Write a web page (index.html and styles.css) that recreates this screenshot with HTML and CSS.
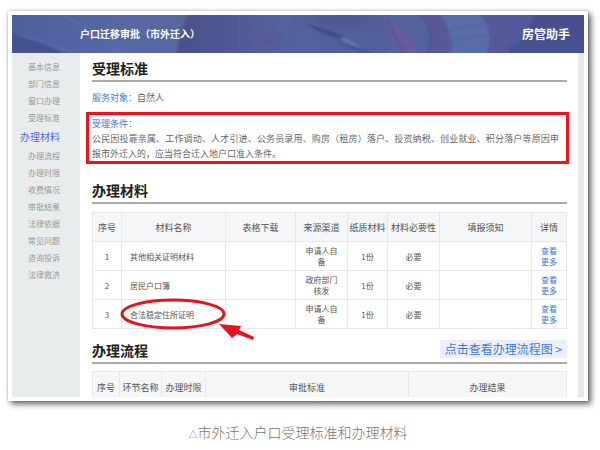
FILE: index.html
```html
<!DOCTYPE html>
<html lang="zh-CN">
<head>
<meta charset="utf-8">
<title>户口迁移审批（市外迁入）</title>
<link rel="stylesheet" href="styles.css">
</head>
<body>
<figure class="figure">
  <div class="card">
    <header class="banner">
      <svg class="banner-art" viewBox="0 0 572 38" preserveAspectRatio="none" aria-hidden="true">
        <defs>
          <filter id="soft" x="-5%" y="-20%" width="110%" height="140%"><feGaussianBlur stdDeviation="1"/></filter>
          <filter id="wide" x="-5%" y="-50%" width="110%" height="200%"><feGaussianBlur stdDeviation="8 4"/></filter>
          <linearGradient id="base" x1="0" x2="1"><stop offset="0" stop-color="#4c5f9f"/><stop offset=".2" stop-color="#5769a4"/><stop offset=".3" stop-color="#54679f"/><stop offset=".7" stop-color="#53649f"/><stop offset="1" stop-color="#4a5997"/></linearGradient>
          <linearGradient id="sleeve" x1="0" x2="1"><stop offset="0" stop-color="#4b4f8a"/><stop offset=".25" stop-color="#4f5994"/><stop offset=".5" stop-color="#53639f"/><stop offset="1" stop-color="#535f9a"/></linearGradient>
        </defs>
        <rect width="572" height="38" fill="url(#base)"/>
        <path d="M177 -4 H376 Q385 15 375 42 H164 Q168 15 177 -4Z" fill="url(#sleeve)" filter="url(#soft)"/>
        <g filter="url(#wide)">
          <ellipse cx="256" cy="24" rx="14" ry="7" fill="#5a5692"/>
          <ellipse cx="330" cy="4" rx="35" ry="5" fill="#4c5590"/>
        </g>
        <g filter="url(#soft)">
          <path d="M0 19 Q30 27 55 40 H0Z" fill="#42528f"/>
          <path d="M8 20 Q34 26 62 38" fill="none" stroke="#6072ac" stroke-width="1"/>
          <path d="M48 0 Q80 12 108 38" fill="none" stroke="#6072ac" stroke-width="1"/>
          <path d="M293 9 Q315 14 334 22 L332 25 Q312 20 293 9Z" fill="#41488a"/>
          <path d="M330 22 Q342 25 352 36 Q340 32 330 25Z" fill="#6977ab"/>
          <path d="M320 24 L350 38 H362 L345 32Z" fill="#4a528e"/>
          <path d="M375 4 Q397 14 410 40 H390 Q378 22 375 4Z" fill="#635d9a"/>
          <path d="M376 5 Q382 22 392 38" fill="none" stroke="#474f8c" stroke-width="1"/>
          <path d="M407 -2 H426 Q441 22 437 40 H416 Q422 18 407 -2Z" fill="#5a5894"/>
          <path d="M408 0 Q418 10 419 24 L416 38" fill="none" stroke="#474e8b" stroke-width="1"/>
          <path d="M428 -2 H470 L480 18 L474 40 H440 Q442 18 428 -2Z" fill="#586da7"/>
          <path d="M434 16 L476 8 M438 26 L478 19" stroke="#4c609b" stroke-width="1"/>
          <path d="M467 -2 H522 Q510 20 490 40 H474 Q484 16 467 -2Z" fill="#55599a"/>
          <path d="M522 -2 H576 V40 H495 Q514 24 522 -2Z" fill="#494f8e"/>
          <path d="M500 29 L576 25 V40 H496Z" fill="#43528f"/>
        </g>
      </svg>
      <h1 class="banner-title">户口迁移审批（市外迁入）</h1>
      <span class="banner-brand">房管助手</span>
    </header>
    <div class="body">
      <nav class="side">
        <a href="#">基本信息</a>
        <a href="#">部门信息</a>
        <a href="#">窗口办理</a>
        <a href="#">受理标准</a>
        <a href="#" class="active">办理材料</a>
        <a href="#">办理流程</a>
        <a href="#">办理时限</a>
        <a href="#">收费情况</a>
        <a href="#">审批结果</a>
        <a href="#">法律依据</a>
        <a href="#">常见问题</a>
        <a href="#">咨询投诉</a>
        <a href="#">法律救济</a>
      </nav>
      <main class="content">
        <section>
          <div class="head"><h2>受理标准</h2></div>
          <p class="target"><span class="label">服务对象：</span>自然人</p>
          <div class="notice">
            <h3 class="label">受理条件：</h3>
            <p>公民因投靠亲属、工作调动、人才引进、公务员录用、购房（租房）落户、投资纳税、创业就业、积分落户等原因申报市外迁入的，应当符合迁入地户口准入条件。</p>
          </div>
        </section>
        <section>
          <div class="head"><h2>办理材料</h2></div>
          <table class="grid materials">
            <colgroup><col class="c-no"><col class="c-name"><col class="c-form"><col class="c-source"><col class="c-paper"><col class="c-need"><col><col class="c-more"></colgroup>
            <thead>
              <tr><th>序号</th><th>材料名称</th><th>表格下载</th><th>来源渠道</th><th>纸质材料</th><th>材料必要性</th><th>填报须知</th><th>详情</th></tr>
            </thead>
            <tbody>
              <tr><td>1</td><td class="name">其他相关证明材料</td><td></td><td class="source">申请人自备</td><td>1份</td><td>必要</td><td></td><td class="more"><a href="#">查看更多</a></td></tr>
              <tr><td>2</td><td class="name">居民户口簿</td><td></td><td class="source">政府部门核发</td><td>1份</td><td>必要</td><td></td><td class="more"><a href="#">查看更多</a></td></tr>
              <tr><td>3</td><td class="name marked">合法稳定住所证明
                <svg class="mark" width="136" height="44" viewBox="0 0 136 44" aria-hidden="true">
                  <ellipse cx="53" cy="16" rx="51" ry="14" fill="none" stroke="#e8131b" stroke-width="3"/>
                  <path d="M99 26 L121 28 L119 32 L134 39 L133 42 L117 36 L112 40Z" fill="#e8131b"/>
                </svg></td><td></td><td class="source">申请人自备</td><td>1份</td><td>必要</td><td></td><td class="more"><a href="#">查看更多</a></td></tr>
            </tbody>
          </table>
        </section>
        <section>
          <div class="head"><h2>办理流程</h2><a class="flow-link" href="#">点击查看办理流程图 &gt;</a></div>
          <table class="grid steps">
            <colgroup><col class="s-no"><col class="s-name"><col class="s-time"><col><col class="s-result"></colgroup>
            <thead>
              <tr><th>序号</th><th>环节名称</th><th>办理时限</th><th>审批标准</th><th>办理结果</th></tr>
            </thead>
          </table>
        </section>
      </main>
    </div>
  </div>
  <figcaption class="caption"><span class="tri">△</span>市外迁入户口受理标准和办理材料</figcaption>
</figure>
</body>
</html>
```

FILE: styles.css
```css
* { box-sizing: border-box; }
body, h1, h2, h3, p, figure { margin: 0; }
body {
  background: #fff;
  color: #666;
  font: 9px/15px "Noto Sans CJK SC", sans-serif;
}
a { color: inherit; text-decoration: none; }

.figure { padding: 11px 12px 0 8px; }
.card {
  background: #fff;
  padding: 4px;
  box-shadow: 0 0 3px rgba(0, 0, 0, .22), 3px 3px 6px rgba(0, 0, 0, .6);
}

.banner {
  position: relative;
  display: flex;
  align-items: center;
  justify-content: space-between;
  height: 38px;
  padding: 0 14px 2px 68px;
  background: #5060a0;
  color: #fff;
}
.banner-art { position: absolute; inset: 0; width: 100%; height: 100%; }
.banner-title, .banner-brand { position: relative; font-weight: 700; }
.banner-title { font-size: 10px; }
.banner-brand { font-size: 12px; }

.body { display: flex; border-right: 6px solid #e6e9e8; }
.side {
  flex: none;
  width: 68px;
  padding: 5px 20px 0 0;
  background: #e9ecec;
  color: #999;
  font-size: 8px;
  line-height: 17px;
  text-align: right;
}
.side a { display: block; white-space: nowrap; }
.side .active { color: #5568e0; font-size: 10px; line-height: 21px; }

.content { flex: 1; min-width: 0; padding: 5px 11px 0 12px; }
.head {
  display: flex;
  align-items: flex-start;
  justify-content: space-between;
  height: 24px;
  border-bottom: 2px solid #aaa;
}
h2 { color: #222; font-size: 14px; line-height: 20px; font-weight: 700; }
.label { color: #3b7be0; font-size: 9px; font-weight: 400; }
.target { padding: 8px 0 7px; }
.notice {
  margin: 0 -2px 16px -6px;
  padding: 1px 7px 0 3px;
  border: 3px solid #f2101b;
  text-align: justify;
}

.grid {
  width: 100%;
  table-layout: fixed;
  border-collapse: collapse;
  color: #555;
}
.grid th, .grid td { padding: 0; border: 1px solid #e6e8ea; text-align: center; }
.grid th { background: #f4f6f8; font-size: 9px; font-weight: 400; white-space: nowrap; }
.materials { margin: 8px 0 11px; }
.materials tr { height: 29px; }
.materials td { font-size: 8px; line-height: 11px; }
.materials .name { padding-left: 8px; text-align: left; }
.materials .source { padding: 0 8px; }
.materials .more { padding: 0 8px; color: #3b7be0; }
.c-no { width: 29px; }
.c-name { width: 104px; }
.c-form { width: 70px; }
.c-source { width: 52px; }
.c-paper { width: 40px; }
.c-need { width: 52px; }
.c-more { width: 35px; }

.marked { position: relative; }
.mark { position: absolute; left: -2px; top: -2px; z-index: 1; pointer-events: none; }

.flow-link {
  padding: 0 5px;
  background: #eceffb;
  color: #3b7be0;
  font-size: 12px;
  line-height: 18px;
}
.steps { margin-top: 7px; }
.steps tr { height: 25px; }
.steps th { padding-top: 6px; border-bottom: 0; }
.s-no { width: 27px; }
.s-name { width: 42px; }
.s-time { width: 44px; }
.s-result { width: 158px; }

.caption {
  padding-top: 21px;
  color: #777;
  font-size: 14px;
  line-height: 20px;
  font-weight: 300;
  text-align: center;
}
.tri { font-size: 9px; font-weight: 400; }
```
